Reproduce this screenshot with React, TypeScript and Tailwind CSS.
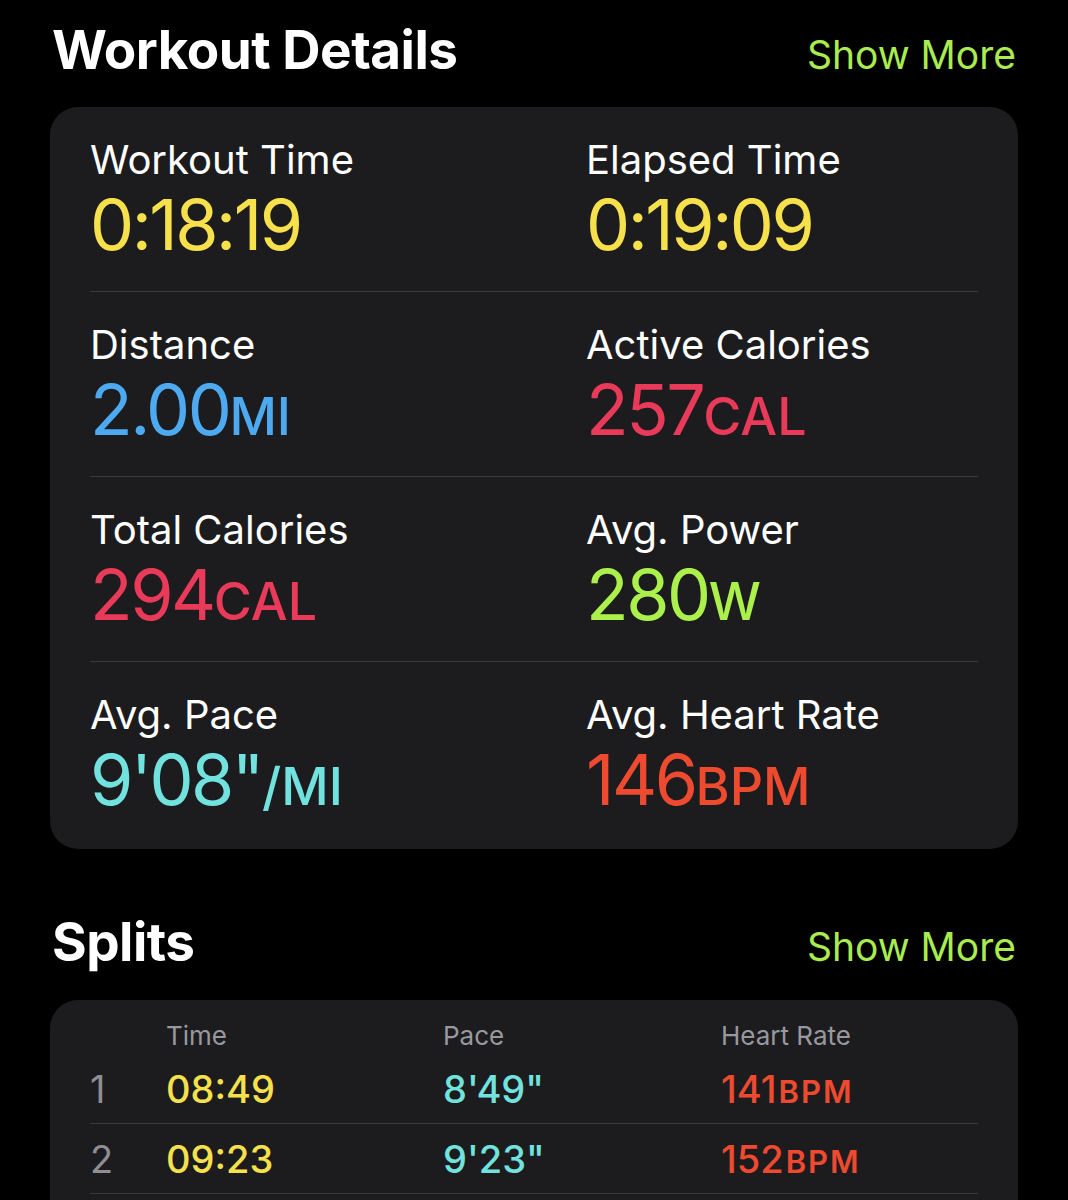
import React from "react";

type Metric = { label: string; value: string; unit?: string; color: string };

const rows: [Metric, Metric][] = [
  [
    { label: "Workout Time", value: "0:18:19", color: "text-[#f6e14c]" },
    { label: "Elapsed Time", value: "0:19:09", color: "text-[#f6e14c]" },
  ],
  [
    { label: "Distance", value: "2.00", unit: "MI", color: "text-[#4daaf1]" },
    { label: "Active Calories", value: "257", unit: "CAL", color: "text-[#e93a5a]" },
  ],
  [
    { label: "Total Calories", value: "294", unit: "CAL", color: "text-[#e93a5a]" },
    { label: "Avg. Power", value: "280", unit: "W", color: "text-[#acf04c]" },
  ],
  [
    { label: "Avg. Pace", value: "9'08\"", unit: "/MI", color: "text-[#72e2df]" },
    { label: "Avg. Heart Rate", value: "146", unit: "BPM", color: "text-[#ee4a30]" },
  ],
];

const splits = [
  { n: "1", time: "08:49", pace: "8'49\"", hr: "141" },
  { n: "2", time: "09:23", pace: "9'23\"", hr: "152" },
];

function MetricCell({ m }: { m: Metric }) {
  return (
    <div className="flex flex-col">
      <div className="h-[46px] text-[40px] leading-[46px] text-white">{m.label}</div>
      <div className={`mt-[6px] flex h-[72px] items-baseline text-[70px] leading-[72px] tracking-[-2.5px] ${m.color}`}>
        <span>{m.value}</span>
        {m.unit && (
          <span className="text-[52px] leading-none font-medium tracking-[0px]">{m.unit}</span>
        )}
      </div>
    </div>
  );
}

function Header({ title }: { title: string }) {
  return (
    <div className="flex h-[52px] items-baseline justify-between px-[52px] leading-[52px]">
      <div className="text-[53px] font-bold text-white tracking-[-0.5px]">{title}</div>
      <div className="text-[39px] text-[#a8ec50]">Show More</div>
    </div>
  );
}

export default function App() {
  return (
    <div
      className="h-[1200px] w-[1068px] overflow-hidden bg-black pt-[24px]"
      style={{ fontFamily: "Inter, 'Noto Sans', sans-serif" }}
    >
      <Header title="Workout Details" />
      <div className="mx-[50px] mt-[31px] rounded-[28px] bg-[#1c1c1e] px-[40px]">
        {rows.map((r, i) => (
          <div
            key={i}
            className={`grid grid-cols-[496px_1fr] pt-[30px] ${
              i < rows.length - 1 ? "border-b border-[#3a3a3c] pb-[30px]" : "pb-[33px]"
            }`}
          >
            <MetricCell m={r[0]} />
            <MetricCell m={r[1]} />
          </div>
        ))}
      </div>

      <div className="mt-[67px]">
        <Header title="Splits" />
      </div>
      <div className="mx-[50px] mt-[32px] rounded-t-[28px] bg-[#1c1c1e] px-[40px] pb-[40px]">
        <div className="grid grid-cols-[76px_277px_278px_1fr] pb-[2px] pt-[20px] text-[26px] leading-[32px] text-[#98989e]">
          <div />
          <div>Time</div>
          <div>Pace</div>
          <div>Heart Rate</div>
        </div>
        {splits.map((s) => (
          <div
            key={s.n}
            className="grid grid-cols-[76px_277px_278px_1fr] border-b border-[#3a3a3c] pb-[11px] pt-[12px] text-[38px] font-medium leading-[46px]"
          >
            <div className="font-normal text-[#8e8e93]">{s.n}</div>
            <div className="text-[#f6e14c]">{s.time}</div>
            <div className="text-[#72e2df]">{s.pace}</div>
            <div className="flex items-baseline text-[#ee4a30]">
              <span>{s.hr}</span>
              <span className="ml-[2px] text-[31px] font-semibold leading-none tracking-[2px]">BPM</span>
            </div>
          </div>
        ))}
      </div>
    </div>
  );
}
